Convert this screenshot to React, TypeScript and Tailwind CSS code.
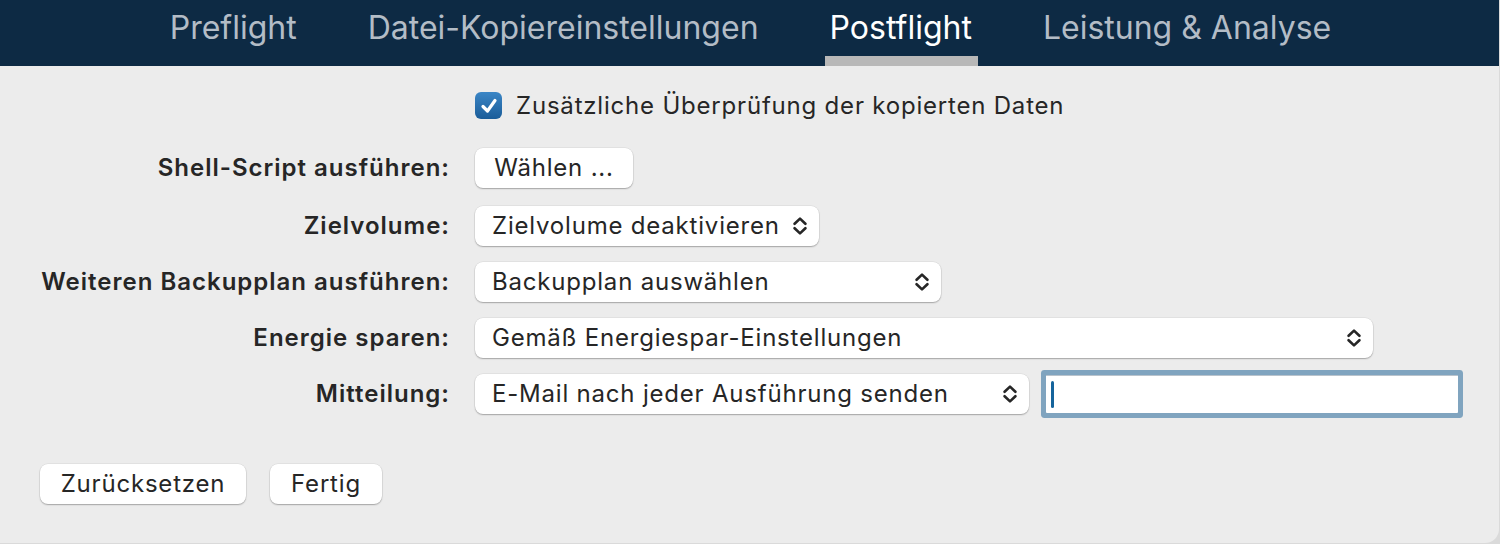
import React from "react";

const tabs = ["Preflight", "Datei-Kopiereinstellungen", "Postflight", "Leistung & Analyse"];

function Chevrons() {
  return (
    <svg width="14" height="20" viewBox="0 0 14 20" fill="none" stroke="#262626" strokeWidth="2.6" strokeLinecap="round" strokeLinejoin="round">
      <path d="M1.6 7.8 L7 2.6 L12.4 7.8" />
      <path d="M1.6 12.2 L7 17.4 L12.4 12.2" />
    </svg>
  );
}

function Select({ value, width }: { value: string; width: string }) {
  return (
    <div
      className={`${width} h-[40px] flex items-center justify-between pl-[17px] pr-[12px] bg-white rounded-[8px] shadow-[0_1px_1.5px_rgba(0,0,0,0.28),0_0_0_0.5px_rgba(0,0,0,0.08)] text-[24px] tracking-[0.8px] text-[#262626]`}
    >
      <span>{value}</span>
      <Chevrons />
    </div>
  );
}

function Button({ children, width }: { children: React.ReactNode; width: string }) {
  return (
    <div
      className={`${width} h-[40px] flex items-center justify-center bg-white rounded-[8px] shadow-[0_1px_1.5px_rgba(0,0,0,0.28),0_0_0_0.5px_rgba(0,0,0,0.08)] text-[24px] tracking-[0.8px] text-[#262626]`}
    >
      {children}
    </div>
  );
}

function Label({ children }: { children: React.ReactNode }) {
  return (
    <div className="h-[40px] flex items-center justify-end text-[24px] tracking-[1px] font-semibold text-[#262626]">
      {children}
    </div>
  );
}

export default function App() {
  return (
    <div className="w-[1500px] h-[544px] bg-[#dadada] font-['Inter',sans-serif]">
      <div className="w-[1499px] h-[543px] bg-[#ececec] rounded-br-[14px] flex flex-col overflow-hidden">
        {/* tab bar */}
        <div className="h-[66px] bg-[#0d2a44] flex justify-center gap-[71px] pl-[2px]">
          {tabs.map((t) => (
            <div key={t} className="relative flex flex-col items-center">
              <span
                className={`mt-[7px] text-[32px] leading-[42px] ${
                  t === "Postflight" ? "text-white" : "text-[#b3bcc6]"
                }`}
              >
                {t}
              </span>
              {t === "Postflight" && (
                <div className="absolute bottom-0 left-[-5px] right-[-6px] h-[10px] bg-[#b8b8b8]" />
              )}
            </div>
          ))}
        </div>

        {/* form */}
        <div className="grid grid-cols-[450px_1fr] gap-x-[25px] pt-[26px]">
          <div />
          <div className="h-[27px] flex items-center gap-[14px]">
            <div className="w-[27px] h-[27px] rounded-[6px] bg-gradient-to-b from-[#3b86c6] to-[#1a5d99] flex items-center justify-center">
              <svg width="20" height="20" viewBox="0 0 20 20" fill="none" stroke="white" strokeWidth="3.2" strokeLinecap="round" strokeLinejoin="round">
                <path d="M4 10.5 L8.5 15 L16 4.5" />
              </svg>
            </div>
            <span className="text-[24px] tracking-[0.8px] text-[#262626]">Zusätzliche Überprüfung der kopierten Daten</span>
          </div>

          <div className="col-span-2 h-[29px]" />

          <Label>Shell-Script ausführen:</Label>
          <div className="flex items-center">
            <Button width="w-[158px]">Wählen ...</Button>
          </div>

          <div className="col-span-2 h-[18px]" />

          <Label>Zielvolume:</Label>
          <div className="flex items-center">
            <Select value="Zielvolume deaktivieren" width="w-[344px]" />
          </div>

          <div className="col-span-2 h-[16px]" />

          <Label>Weiteren Backupplan ausführen:</Label>
          <div className="flex items-center">
            <Select value="Backupplan auswählen" width="w-[466px]" />
          </div>

          <div className="col-span-2 h-[16px]" />

          <Label>Energie sparen:</Label>
          <div className="flex items-center">
            <Select value="Gemäß Energiespar-Einstellungen" width="w-[898px]" />
          </div>

          <div className="col-span-2 h-[16px]" />

          <Label>Mitteilung:</Label>
          <div className="flex items-center gap-[17px]">
            <Select value="E-Mail nach jeder Ausführung senden" width="w-[554px]" />
            <div className="w-[412px] h-[38px] bg-white border-t border-[#b9c3cc] ring-[5px] ring-[#80a4bf] rounded-[1px] flex items-center pl-[5px]">
              <div className="w-[3px] h-[27px] rounded-full bg-[#15649c]" />
            </div>
          </div>
        </div>

        {/* footer buttons */}
        <div className="flex gap-[24px] pl-[40px] mt-[50px]">
          <Button width="w-[206px]">Zurücksetzen</Button>
          <Button width="w-[112px]">Fertig</Button>
        </div>
      </div>
    </div>
  );
}
